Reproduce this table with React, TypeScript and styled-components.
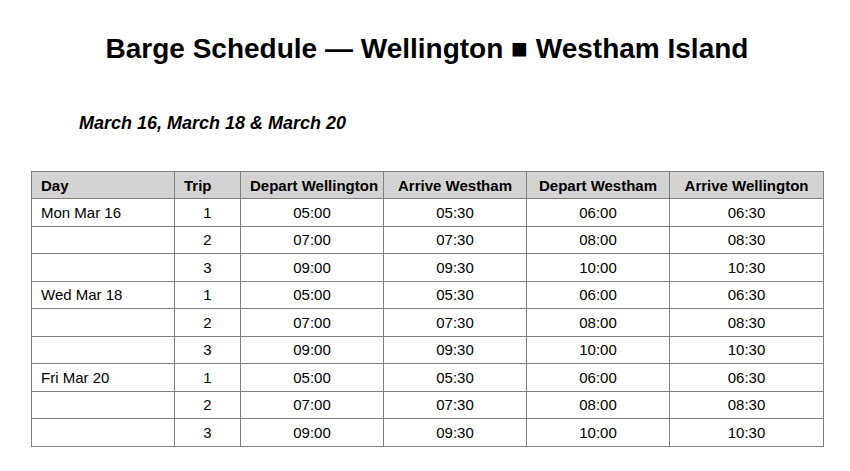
import React from 'react';
import styled, { createGlobalStyle } from 'styled-components';

const GlobalStyle = createGlobalStyle`
  html, body {
    margin: 0;
    padding: 0;
    background: #ffffff;
  }
  body {
    font-family: 'Liberation Sans', Arial, sans-serif;
    color: #000000;
  }
`;

const Page = styled.div`
  width: 792px;
  padding: 0 27px 0 31px;
  display: flex;
  flex-direction: column;
`;

const Title = styled.h1`
  margin: 33px 0 0;
  font-size: 28px;
  line-height: 32px;
  font-weight: bold;
  text-align: center;
`;

const Subtitle = styled.h2`
  margin: 47px 0 0 48px;
  font-size: 18px;
  line-height: 22px;
  font-weight: bold;
  font-style: italic;
`;

const Table = styled.table`
  margin-top: 37px;
  width: 792px;
  border-collapse: collapse;
  table-layout: fixed;
  font-size: 15px;
`;

const HeadCell = styled.th<{ $align?: 'left' | 'center' }>`
  height: 26px;
  padding: 0 9px;
  background: #d3d3d3;
  border: 1px solid #808080;
  font-weight: bold;
  text-align: ${(p) => p.$align ?? 'center'};
  white-space: nowrap;
`;

const Cell = styled.td<{ $align?: 'left' | 'center' }>`
  height: 26.5px;
  padding: 0 9px;
  border: 1px solid #808080;
  text-align: ${(p) => p.$align ?? 'center'};
  white-space: nowrap;
`;

const widths = [143, 66, 143, 143, 143, 154];
const headers = ['Day', 'Trip', 'Depart Wellington', 'Arrive Westham', 'Depart Westham', 'Arrive Wellington'];

const days = ['Mon Mar 16', 'Wed Mar 18', 'Fri Mar 20'];
const trips = [
  ['05:00', '05:30', '06:00', '06:30'],
  ['07:00', '07:30', '08:00', '08:30'],
  ['09:00', '09:30', '10:00', '10:30'],
];

const App = () => {
  return (
    <Page>
      <GlobalStyle />
      <Title>Barge Schedule — Wellington ■ Westham Island</Title>
      <Subtitle>March 16, March 18 &amp; March 20</Subtitle>
      <Table>
        <colgroup>
          {widths.map((w, i) => (
            <col key={i} style={{ width: w }} />
          ))}
        </colgroup>
        <thead>
          <tr>
            {headers.map((h, i) => (
              <HeadCell key={h} $align={i === 0 || i === 1 ? 'left' : 'center'}>
                {h}
              </HeadCell>
            ))}
          </tr>
        </thead>
        <tbody>
          {days.map((day) =>
            trips.map((times, t) => (
              <tr key={day + t}>
                <Cell $align="left">{t === 0 ? day : ''}</Cell>
                <Cell>{t + 1}</Cell>
                {times.map((time, k) => (
                  <Cell key={k}>{time}</Cell>
                ))}
              </tr>
            ))
          )}
        </tbody>
      </Table>
    </Page>
  );
};

export default App;
